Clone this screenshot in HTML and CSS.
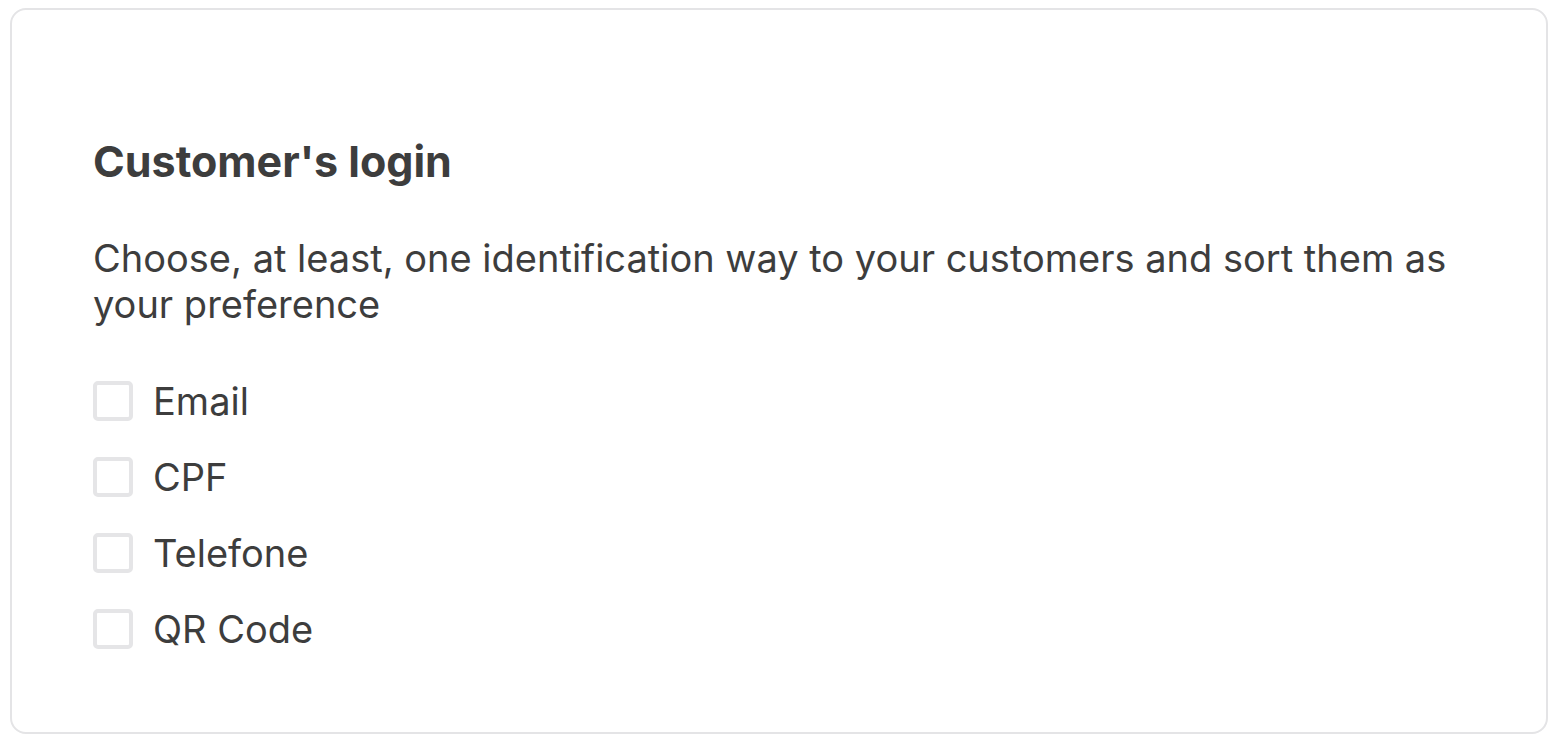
FILE: index.html
```html
<!DOCTYPE html>
<html lang="en">
<head>
<meta charset="utf-8">
<title>Customer's login</title>
<link rel="stylesheet" href="styles.css">
</head>
<body>
<section class="card">
  <h2 class="title">Customer's login</h2>
  <p class="desc">Choose, at least, one identification way to your customers and sort them as your preference</p>
  <ul class="options">
    <li class="option"><span class="box"></span><span class="label">Email</span></li>
    <li class="option"><span class="box"></span><span class="label">CPF</span></li>
    <li class="option"><span class="box"></span><span class="label">Telefone</span></li>
    <li class="option"><span class="box"></span><span class="label">QR Code</span></li>
  </ul>
</section>
</body>
</html>
```
FILE: styles.css
```css
html, body { margin: 0; padding: 0; background: #fff; }
body {
  padding: 8px 15px 6px 10px;
  font-family: Inter, "Liberation Sans", sans-serif;
  color: #3d3d3d;
}
.card {
  box-sizing: border-box;
  width: 1538px;
  height: 726px;
  border: 2px solid #e4e4e6;
  border-radius: 16px;
  padding: 127px 80px 0 81px;
}
.title {
  margin: 0;
  font-size: 43px;
  font-weight: 700;
  line-height: 48px;
}
.desc {
  margin: 50px 0 0;
  font-size: 38px;
  line-height: 46px;
  max-width: 1373px;
}
.options {
  list-style: none;
  margin: 54px 0 0;
  padding: 0;
  display: flex;
  flex-direction: column;
  gap: 36px;
}
.option {
  display: flex;
  align-items: center;
  gap: 20px;
  height: 40px;
}
.box {
  box-sizing: border-box;
  width: 40px;
  height: 40px;
  border: 4px solid #e5e5e7;
  border-radius: 5px;
  flex: none;
}
.label {
  font-size: 38px;
  line-height: 40px;
}
```
